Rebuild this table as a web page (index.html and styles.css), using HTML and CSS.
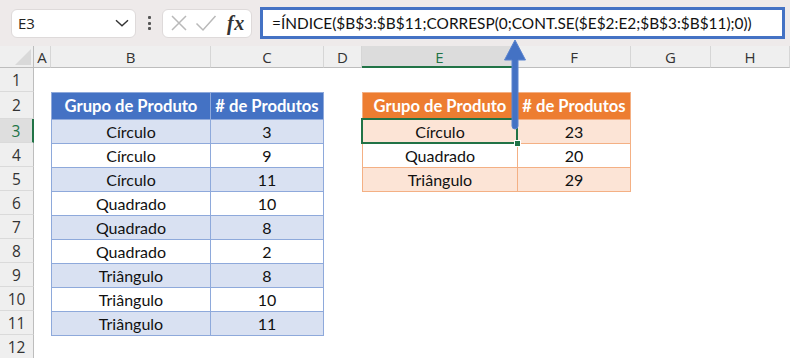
FILE: index.html
```html
<!DOCTYPE html>
<html lang="pt">
<head>
<meta charset="utf-8">
<title>ÍNDICE e CORRESP</title>
<link rel="stylesheet" href="styles.css">
</head>
<body>
<div class="app">
  <div class="toolbar">
    <div class="namebox">
      <span class="namebox-ref">E3</span>
      <svg class="chevron" width="14" height="8" viewBox="0 0 14 8"><path d="M1 1.2 L7 6.8 L13 1.2" fill="none" stroke="#333" stroke-width="1.4"/></svg>
    </div>
    <div class="grip"><span></span><span></span><span></span></div>
    <div class="fnbox">
      <svg class="fn-icon" width="18" height="18" viewBox="0 0 18 18"><path d="M2 2 L16 16 M16 2 L2 16" stroke="#b9b9b9" stroke-width="1.5" fill="none"/></svg>
      <svg class="fn-icon" width="22" height="18" viewBox="0 0 22 18"><path d="M1.5 9.5 L8 16 L20.5 2" stroke="#b9b9b9" stroke-width="1.5" fill="none"/></svg>
      <span class="fx">fx</span>
    </div>
    <div class="formula">=ÍNDICE($B$3:$B$11;CORRESP(0;CONT.SE($E$2:E2;$B$3:$B$11);0))</div>
  </div>

  <div class="sheet">
    <div class="corner"><span class="corner-tri"></span></div>
    <div class="colhead">A</div>
    <div class="colhead">B</div>
    <div class="colhead">C</div>
    <div class="colhead">D</div>
    <div class="colhead colhead-active">E</div>
    <div class="colhead">F</div>
    <div class="colhead">G</div>
    <div class="colhead">H</div>

    <div class="rowhead" style="grid-row:2">1</div>
    <div class="rowhead" style="grid-row:3">2</div>
    <div class="rowhead rowhead-active" style="grid-row:4">3</div>
    <div class="rowhead" style="grid-row:5">4</div>
    <div class="rowhead" style="grid-row:6">5</div>
    <div class="rowhead" style="grid-row:7">6</div>
    <div class="rowhead" style="grid-row:8">7</div>
    <div class="rowhead" style="grid-row:9">8</div>
    <div class="rowhead" style="grid-row:10">9</div>
    <div class="rowhead" style="grid-row:11">10</div>
    <div class="rowhead" style="grid-row:12">11</div>
    <div class="rowhead" style="grid-row:13">12</div>

    <div class="xtable xtable-blue">
      <div class="th">Grupo de Produto</div><div class="th"># de Produtos</div>
      <div class="td band">Círculo</div><div class="td band">3</div>
      <div class="td">Círculo</div><div class="td">9</div>
      <div class="td band">Círculo</div><div class="td band">11</div>
      <div class="td">Quadrado</div><div class="td">10</div>
      <div class="td band">Quadrado</div><div class="td band">8</div>
      <div class="td">Quadrado</div><div class="td">2</div>
      <div class="td band">Triângulo</div><div class="td band">8</div>
      <div class="td">Triângulo</div><div class="td">10</div>
      <div class="td band">Triângulo</div><div class="td band">11</div>
    </div>

    <div class="xtable xtable-orange">
      <div class="th">Grupo de Produto</div><div class="th"># de Produtos</div>
      <div class="td band">Círculo</div><div class="td band">23</div>
      <div class="td">Quadrado</div><div class="td">20</div>
      <div class="td band">Triângulo</div><div class="td band">29</div>
      <div class="selection"><span class="fill-handle"></span></div>
    </div>
  </div>

  <svg class="callout-arrow" width="28" height="94" viewBox="0 0 28 94">
    <path d="M14 1 L24.5 21 L17 21 L17 87 Q17 90 14 90 Q11 90 11 87 L11 21 L3.5 21 Z" fill="#4472c4" stroke="#5b84cf" stroke-width="1"/>
  </svg>
</div>
</body>
</html>
```

FILE: styles.css
```css
* { box-sizing: border-box; }

html, body {
  margin: 0;
  padding: 0;
  background: #ffffff;
}

.app {
  position: relative;
  width: 790px;
  height: 358px;
  overflow: hidden;
  font-family: "Lato", "Open Sans", sans-serif;
}

/* ---------- formula bar ---------- */
.toolbar {
  height: 46px;
  background: #eeeaea;
  display: flex;
  align-items: center;
  padding: 0 5px 0 11px;
}

.namebox {
  width: 125px;
  height: 29px;
  background: #fff;
  border: 1px solid #dedada;
  border-radius: 6px;
  display: flex;
  align-items: center;
  justify-content: space-between;
  padding: 0 6px 0 6px;
}

.namebox-ref {
  font-family: "Open Sans", sans-serif;
  font-size: 15px;
  color: #222;
}

.grip {
  width: 26px;
  display: flex;
  flex-direction: column;
  align-items: center;
  gap: 2.5px;
}

.grip span {
  width: 3px;
  height: 3px;
  background: #555;
  border-radius: 1px;
}

.fnbox {
  width: 90px;
  height: 29px;
  background: #fff;
  border: 1px solid #dedada;
  border-radius: 6px;
  display: flex;
  align-items: center;
  padding: 0 5px 0 7px;
  gap: 7px;
}

.fx {
  font-family: "Liberation Serif", "DejaVu Serif", serif;
  font-style: italic;
  font-weight: 700;
  font-size: 20px;
  color: #333;
  margin-left: 3px;
  letter-spacing: 0.5px;
}

.formula {
  margin-left: 8px;
  width: 525px;
  height: 32px;
  background: #fff;
  border: 3px solid #4472c4;
  display: flex;
  align-items: center;
  padding-left: 9px;
  font-family: "Lato", sans-serif;
  font-size: 15.4px;
  color: #111;
  white-space: nowrap;
}

/* ---------- sheet grid ---------- */
.sheet {
  display: grid;
  grid-template-columns: 34px 17px 160px 113px 38px 156px 113px 80px 79px;
  grid-template-rows: 22px 24px 27px repeat(10, 24px);
}

.corner {
  grid-row: 1;
  grid-column: 1;
  background: #efefef;
  border-right: 1px solid #bdbdbd;
  border-bottom: 1px solid #bdbdbd;
  position: relative;
}

.corner-tri {
  position: absolute;
  right: 2px;
  bottom: 2px;
  width: 0;
  height: 0;
  border-left: 16px solid transparent;
  border-bottom: 16px solid #d9d9d9;
}

.colhead {
  grid-row: 1;
  background: #efefef;
  border-right: 1px solid #d6d6d6;
  border-bottom: 1px solid #bdbdbd;
  display: flex;
  align-items: center;
  justify-content: center;
  font-family: "Open Sans", sans-serif;
  font-size: 15px;
  color: #333;
  padding-top: 1px;
}

.colhead:last-of-type { border-right: none; }

.colhead-active {
  background: #dcdcdc;
  color: #217346;
  border-bottom: 2px solid #217346;
}

.rowhead {
  grid-column: 1;
  background: #efefef;
  border-right: 1px solid #bdbdbd;
  border-bottom: 1px solid #dadada;
  display: flex;
  align-items: center;
  justify-content: center;
  font-family: "Open Sans", sans-serif;
  font-size: 15.5px;
  color: #333;
}

.rowhead-active {
  background: #dedede;
  color: #217346;
  border-right: 2px solid #217346;
}

/* ---------- tables ---------- */
.xtable {
  grid-row: 3 / 13;
  align-self: start;
  position: relative;
  display: grid;
  gap: 1px;
  padding: 1px;
  grid-template-rows: 26px;
  grid-auto-rows: 23px;
  font-size: 16px;
  color: #111;
}

.xtable-blue {
  grid-column: 3 / 5;
  grid-template-columns: 158px 112px;
  background: #8ea9db;
}

.xtable-orange {
  grid-column: 6 / 8;
  grid-template-columns: 154px 112px;
  background: #f4b084;
}

.th, .td {
  display: flex;
  align-items: center;
  justify-content: center;
  white-space: nowrap;
  background: #fff;
}

.th {
  font-weight: 700;
  color: #fff;
  font-size: 16.6px;
}

.xtable-blue .th { background: #4472c4; }
.xtable-orange .th { background: #ed7d31; }
.xtable-blue .band { background: #d9e1f2; }
.xtable-orange .band { background: #fce4d6; }

/* active cell outline */
.selection {
  position: absolute;
  left: -1px;
  top: 26px;
  width: 157px;
  height: 26px;
  border: 2px solid #217346;
}

.fill-handle {
  position: absolute;
  right: -5px;
  bottom: -5px;
  width: 7px;
  height: 7px;
  background: #217346;
  border: 1px solid #fff;
}

/* callout arrow pointing at the formula */
.callout-arrow {
  position: absolute;
  left: 501px;
  top: 39px;
}
```
